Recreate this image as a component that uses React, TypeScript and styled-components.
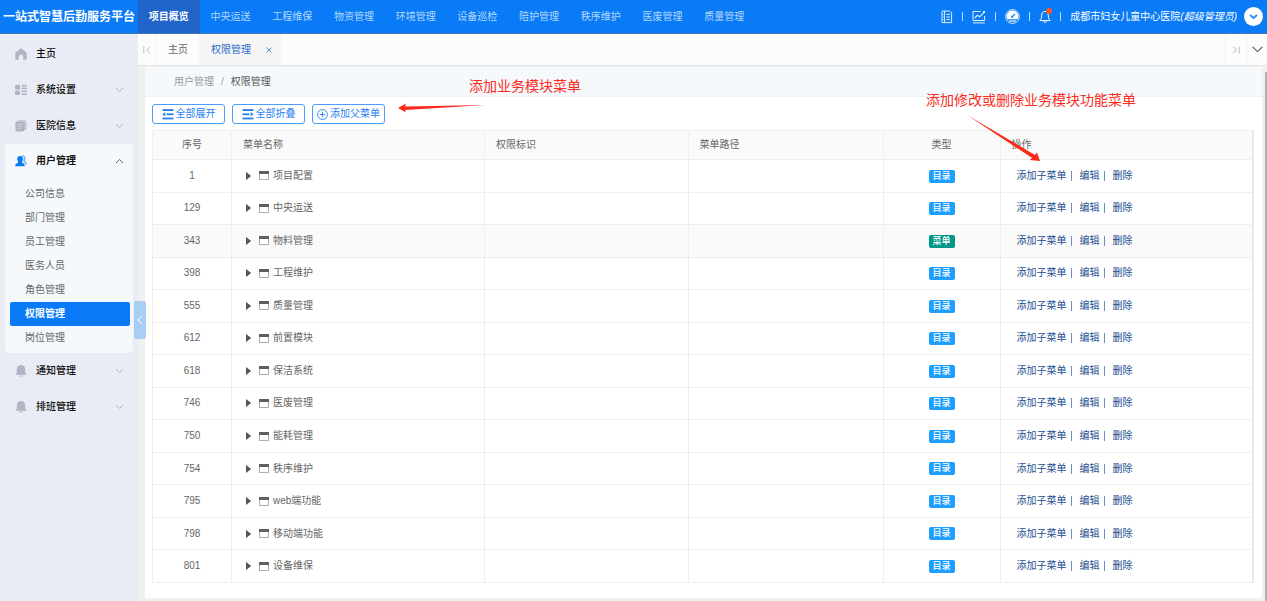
import React from "react";
import styled, { createGlobalStyle, css } from "styled-components";

const GlobalStyle = createGlobalStyle`
  * { box-sizing: border-box; }
  body {
    margin: 0;
    background: #f0f0f0;
    color: #666;
    font: 10px/16px "Liberation Sans", "Noto Sans CJK SC", sans-serif;
  }
  button { font: inherit; color: inherit; background: none; border: 0; padding: 0; cursor: pointer; }
  a { color: inherit; text-decoration: none; }
  ul { list-style: none; margin: 0; padding: 0; }
  svg { display: block; flex: none; }
`;

const Page = styled.div`
  position: relative;
  display: flex;
  flex-direction: column;
  height: 100vh;
`;

/* ---------- header ---------- */
const Header = styled.header`
  display: flex;
  flex: none;
  height: 34px;
  background: #0a7bf7;
  border-bottom: 1px solid #4577b5;
  color: #fff;
`;

const Brand = styled.h1`
  display: flex;
  align-items: center;
  justify-content: center;
  flex: none;
  width: 138px;
  margin: 0;
  font-size: 12px;
  font-weight: 700;
  white-space: nowrap;
`;

const TopNav = styled.nav`
  display: grid;
  grid-template-columns: repeat(10, 1fr);
  width: 617px;
`;

const TopLink = styled.a<{ $active?: boolean }>`
  display: flex;
  align-items: center;
  justify-content: center;
  white-space: nowrap;
  color: ${(p) => (p.$active ? "#fff" : "#b3d7fc")};
  font-weight: ${(p) => (p.$active ? 700 : 400)};
  background: ${(p) => (p.$active ? "#2165c8" : "transparent")};
`;

const HeaderTools = styled.div`
  display: flex;
  align-items: center;
  gap: 9px;
  margin-left: auto;
  padding-right: 4px;
`;

const ToolButton = styled.button`
  position: relative;
  display: flex;
`;

const Dot = styled.span`
  position: absolute;
  top: -2px;
  right: -1px;
  width: 6px;
  height: 6px;
  border-radius: 50%;
  background: #ff5722;
`;

const Divider = styled.span`
  width: 1px;
  height: 9px;
  background: #b9dafd;
`;

const UserName = styled.span`
  white-space: nowrap;
`;

const UserToggle = styled.button`
  display: flex;
  align-items: center;
  justify-content: center;
  width: 19px;
  height: 19px;
  margin-left: -2px;
  border-radius: 50%;
  background: #fff;
`;

/* ---------- sidebar ---------- */
const Body = styled.div`
  display: flex;
  flex: 1;
  min-height: 0;
`;

const Sidebar = styled.aside`
  position: relative;
  flex: none;
  width: 138px;
  padding: 2px 5px 0;
  background: #e9ecf4;
`;

const menuRow = css`
  display: flex;
  align-items: center;
  width: 100%;
  padding: 0 9px 0 10px;
  color: #111;
  text-align: left;
`;

const MenuButton = styled.button<{ $open?: boolean }>`
  ${menuRow}
  height: ${(p) => (p.$open ? "33px" : "36px")};
  font-weight: ${(p) => (p.$open ? 700 : 500)};
`;

const MenuLabel = styled.span`
  flex: 1;
  padding-left: 9px;
`;

const MenuGroup = styled.section`
  padding-bottom: 3px;
  border-radius: 4px;
  background: #f5f9fc;
`;

const SubList = styled.ul`
  padding: 5px 3px 0 5px;
`;

const SubLink = styled.a<{ $active?: boolean }>`
  display: block;
  height: 24px;
  padding-left: 15px;
  border-radius: 2px;
  line-height: 24px;
  color: ${(p) => (p.$active ? "#fff" : "#666")};
  font-weight: ${(p) => (p.$active ? 700 : 400)};
  background: ${(p) => (p.$active ? "#0a7bf7" : "transparent")};
`;

const CollapseHandle = styled.button`
  position: absolute;
  z-index: 1;
  top: 267px;
  right: -8px;
  display: flex;
  align-items: center;
  justify-content: center;
  width: 12px;
  height: 38px;
  border-radius: 2px;
  background: #a9cef6;
`;

/* ---------- main ---------- */
const Main = styled.main`
  display: flex;
  flex: 1;
  flex-direction: column;
  min-width: 0;
`;

const TabBar = styled.div`
  display: flex;
  flex: none;
  height: 32px;
  background: #fcfcfc;
  border-bottom: 1px solid #e4e4e4;
`;

const TabArrow = styled.button<{ $right?: boolean }>`
  display: flex;
  align-items: center;
  justify-content: center;
  width: ${(p) => (p.$right ? "21px" : "18px")};
  border: 0 solid #f2f2f2;
  border-width: ${(p) => (p.$right ? "0 0 0 1px" : "0 1px 0 0")};
`;

const Tab = styled.div<{ $active?: boolean }>`
  display: flex;
  align-items: center;
  gap: 15px;
  padding: 0 ${(p) => (p.$active ? "9px" : "11px")} 0 12px;
  color: ${(p) => (p.$active ? "#2a6bcb" : "#666")};
  background: ${(p) => (p.$active ? "#f5f5f5" : "transparent")};
`;

const TabSpacer = styled.div`
  flex: 1;
`;

const Scroller = styled.div`
  display: flex;
  flex: 1;
  min-height: 0;
  padding-left: 7px;
`;

const ScrollTrack = styled.div`
  display: flex;
  flex: none;
  width: 2px;
  padding-top: 6px;
`;

const ScrollThumb = styled.div`
  flex: 1;
  border-radius: 2px 2px 0 0;
  background: #b0b0b0;
`;

const Panel = styled.section`
  display: flex;
  flex: 1;
  flex-direction: column;
  margin: 1px 3px 3px 0;
  border-radius: 2px;
  background: #fff;
`;

const Breadcrumb = styled.nav`
  display: flex;
  align-items: center;
  flex: none;
  gap: 7px;
  height: 30px;
  padding-left: 29px;
  border-bottom: 1px solid #eef1f4;
  background: #f5f9fc;
  color: #999;
`;

const Current = styled.span`
  color: #555;
`;

const PanelBody = styled.div`
  display: flex;
  flex: 1;
  flex-direction: column;
  gap: 6px;
  min-height: 0;
  padding: 7px 8px 15px 7px;
`;

const Toolbar = styled.div`
  display: flex;
  gap: 7px;
`;

const OutlineButton = styled.button`
  display: flex;
  align-items: center;
  justify-content: center;
  gap: 2px;
  width: 73px;
  height: 20px;
  border: 1px solid #4a9df8;
  border-radius: 3px;
  color: #1e80f0;
  white-space: nowrap;
`;

const TableWrap = styled.div`
  flex: 1;
  min-height: 0;
`;

const Table = styled.table`
  width: 100%;
  height: 100%;
  border-collapse: collapse;
  table-layout: fixed;
  border: 1px solid #e9e9e9;
  border-right: 2px solid #e9e9e9;
`;

const Col = styled.col<{ $width?: string }>`
  width: ${(p) => p.$width ?? "auto"};
`;

const Th = styled.th<{ $center?: boolean }>`
  height: 29px;
  padding: 0 11px;
  border: 1px solid #eee;
  background: #fafafa;
  font-weight: 400;
  text-align: ${(p) => (p.$center ? "center" : "left")};
`;

const Row = styled.tr<{ $hover?: boolean }>`
  background: ${(p) => (p.$hover ? "#fafafa" : "#fff")};
`;

const Td = styled.td<{ $center?: boolean }>`
  padding: 4px 11px;
  border: 1px solid #eee;
  text-align: ${(p) => (p.$center ? "center" : "left")};
`;

const TreeCell = styled.div`
  display: flex;
  align-items: center;
  padding-left: 2px;
`;

const TreeToggle = styled.button`
  display: flex;
  margin-right: 7px;
`;

const TreeName = styled.span`
  padding-left: 4px;
`;

const Badge = styled.span<{ $menu?: boolean }>`
  display: inline-block;
  width: 26px;
  height: 13px;
  border-radius: 2px;
  background: ${(p) => (p.$menu ? "#009688" : "#1e9fff")};
  color: #fff;
  font-size: 9px;
  font-weight: 500;
  line-height: 13px;
  vertical-align: middle;
`;

const Actions = styled.div`
  display: flex;
  align-items: center;
  padding-left: 5px;
  color: #1d4f91;
`;

const ActionLink = styled.a`
  white-space: nowrap;
`;

const Bar = styled.span`
  width: 1px;
  height: 10px;
  margin: 0 8px 0 4px;
  background: #6f8fbc;
`;

/* ---------- callouts ---------- */
const Note = styled.p<{ $top: number; $left?: number; $right?: number }>`
  position: absolute;
  z-index: 2;
  top: ${(p) => p.$top}px;
  left: ${(p) => (p.$left === undefined ? "auto" : `${p.$left}px`)};
  right: ${(p) => (p.$right === undefined ? "auto" : `${p.$right}px`)};
  margin: 0;
  color: #fb2a1c;
  font-size: 14px;
  line-height: 20px;
  white-space: nowrap;
`;

const NoteArrow = styled.svg<{ $top: number; $left?: number; $right?: number }>`
  position: absolute;
  z-index: 2;
  top: ${(p) => p.$top}px;
  left: ${(p) => (p.$left === undefined ? "auto" : `${p.$left}px`)};
  right: ${(p) => (p.$right === undefined ? "auto" : `${p.$right}px`)};
  fill: #fb2a1c;
  pointer-events: none;
`;

/* ---------- icons ---------- */
const Chevron = ({ up, color = "#b5b8c0" }: { up?: boolean; color?: string }) => (
  <svg width="9" height="6" viewBox="0 0 9 6" fill="none" stroke={color}>
    <path d={up ? "M1 5l3.5-3.5L8 5" : "M1 1l3.5 3.5L8 1"} />
  </svg>
);

const HomeIcon = () => (
  <svg width="12" height="12" viewBox="0 0 12 12" fill="#b1b4c4">
    <path d="M6 0.2L11.2 4.2Q11.7 4.6 11.7 5.2V10.8Q11.7 11.8 10.7 11.8H8.2V8.8A2.2 2.2 0 0 0 3.8 8.8V11.8H1.3Q0.3 11.8 0.3 10.8V5.2Q0.3 4.6 0.8 4.2Z" />
  </svg>
);

const GridIcon = () => (
  <svg width="12" height="12" viewBox="0 0 12 12" fill="#b1b4c4">
    <rect x="0" y="0.8" width="5" height="4.6" rx="1" />
    <rect x="0" y="6.4" width="5" height="4.6" rx="1" />
    <rect x="6.4" y="0.8" width="5.6" height="1.7" rx="0.6" />
    <rect x="6.4" y="3.6" width="5.6" height="1.7" rx="0.6" />
    <rect x="6.4" y="6.4" width="5.6" height="1.7" rx="0.6" />
    <rect x="6.4" y="9.2" width="5.6" height="1.7" rx="0.6" />
  </svg>
);

const PapersIcon = () => (
  <svg width="12" height="12" viewBox="0 0 12 12">
    <rect x="2.5" y="0.3" width="9" height="9.6" rx="1.5" fill="#c3c6d2" />
    <rect x="0.4" y="1.6" width="9" height="10" rx="1.5" fill="#b1b4c4" />
    <path d="M2.4 4.5H7.4M2.4 6.5H7.4M2.4 8.6H5.4" stroke="#d5d8e2" strokeWidth="0.8" />
  </svg>
);

const UserIcon = () => (
  <svg width="12" height="12" viewBox="0 0 12 12">
    <path d="M7 0.8A2.8 2.8 0 0 1 9 5.6L11.4 9.4" fill="none" stroke="#7db6f8" strokeWidth="1.6" />
    <path d="M5 1A2.8 3 0 0 1 7.2 6.2V7.4L9.2 9Q9.8 9.6 9.8 11.2H0.2Q0.2 9.6 0.9 9L3 7.4V6.2A2.8 3 0 0 1 5 1Z" fill="#0a7bf7" />
  </svg>
);

const SolidBell = () => (
  <svg width="12" height="12" viewBox="0 0 12 12" fill="#b1b4c4">
    <path d="M6 0A4.2 4.2 0 0 1 10.2 4.4V7.6L11.4 9.2V9.8H0.6V9.2L1.8 7.6V4.4A4.2 4.2 0 0 1 6 0Z" />
    <rect x="4" y="10.4" width="4" height="1.2" rx="0.6" />
  </svg>
);

const ReportIcon = () => (
  <svg width="12" height="14" viewBox="0 0 12 14" fill="none" stroke="#d8eafe">
    <path d="M1 1H8.6L10.6 3V12.6H1Z" />
    <path d="M3.6 1V12.6M5.4 4.4H9M5.4 7H9M5.4 9.6H9" />
    <path d="M1.6 4.4H2.8M1.6 7H2.8M1.6 9.6H2.8" strokeWidth="0.8" />
  </svg>
);

const ChartIcon = () => (
  <svg width="14" height="14" viewBox="0 0 14 14" fill="none" stroke="#e4f0fe">
    <path d="M8.5 1.5H1V10.5H12.6V6M1 12.9H12.8" />
    <path d="M2.8 8L5.4 5.2L7.6 6.8L11.8 2.6" strokeWidth="1.2" />
    <circle cx="12" cy="2.2" r="1.1" fill="#fff" stroke="none" />
  </svg>
);

const GaugeIcon = () => (
  <svg width="15" height="15" viewBox="0 0 15 15">
    <circle cx="7.5" cy="7.5" r="6.9" fill="none" stroke="#cfe5fd" strokeWidth="1" />
    <path d="M7.5 1.6A5.7 5.7 0 0 1 12.6 10.2H2.4A5.7 5.7 0 0 1 7.5 1.6Z" fill="#fff" />
    <path d="M7.2 7.8L9.8 4.8" stroke="#0a7bf7" strokeWidth="1.2" />
    <circle cx="7.2" cy="7.8" r="1.1" fill="#0a7bf7" />
    <path d="M4 12H11" stroke="#e4f0fe" strokeWidth="1.2" />
  </svg>
);

const BellIcon = () => (
  <svg width="12" height="14" viewBox="0 0 12 14" fill="none" stroke="#fff">
    <path d="M6 1.4C3.6 1.4 2.7 3.4 2.7 5.4C2.7 8 1.8 9.4 0.8 10.6H11.2C10.2 9.4 9.3 8 9.3 5.4C9.3 3.4 8.4 1.4 6 1.4Z" />
    <path d="M4.4 11.4Q6 13.8 7.6 11.4" />
  </svg>
);

const ListIcon = ({ out }: { out?: boolean }) => (
  <svg width="12" height="11" viewBox="0 0 12 11" fill="#1e80f0">
    <rect x="0.5" y="0.2" width="11" height="1.8" />
    <rect x={out ? 4.5 : 0.5} y="4.4" width="7" height="1.8" />
    <rect x="0.5" y="8.6" width="11" height="1.8" />
    <path d={out ? "M0.3 5.3L3.2 3.2V7.4Z" : "M11.6 5.3L8.7 3.2V7.4Z"} />
  </svg>
);

const PlusCircle = () => (
  <svg width="11" height="11" viewBox="0 0 11 11" fill="none" stroke="#1e80f0" strokeWidth="0.9">
    <circle cx="5.5" cy="5.5" r="4.9" />
    <path d="M5.5 2.8V8.2M2.8 5.5H8.2" />
  </svg>
);

const WindowIcon = () => (
  <svg width="10" height="9" viewBox="0 0 10 9">
    <rect x="0.5" y="0.5" width="9" height="8" fill="#fff" stroke="#999" strokeWidth="0.8" />
    <rect x="0" y="0" width="10" height="3" fill="#5f5f5f" />
  </svg>
);

/* ---------- data ---------- */
const topItems = ["项目概览", "中央运送", "工程维保", "物资管理", "环境管理", "设备巡检", "陪护管理", "秩序维护", "医废管理", "质量管理"];

const subItems = ["公司信息", "部门管理", "员工管理", "医务人员", "角色管理", "权限管理", "岗位管理"];

const rows: { id: number; name: string; menu?: boolean }[] = [
  { id: 1, name: "项目配置" },
  { id: 129, name: "中央运送" },
  { id: 343, name: "物料管理", menu: true },
  { id: 398, name: "工程维护" },
  { id: 555, name: "质量管理" },
  { id: 612, name: "前置模块" },
  { id: 618, name: "保洁系统" },
  { id: 746, name: "医废管理" },
  { id: 750, name: "能耗管理" },
  { id: 754, name: "秩序维护" },
  { id: 795, name: "web端功能" },
  { id: 798, name: "移动端功能" },
  { id: 801, name: "设备维保" },
];

const MenuItem = ({ icon, label, leaf, open }: { icon: React.ReactNode; label: string; leaf?: boolean; open?: boolean }) => (
  <MenuButton type="button" $open={open} aria-expanded={leaf ? undefined : !!open}>
    {icon}
    <MenuLabel>{label}</MenuLabel>
    {!leaf && <Chevron up={open} color={open ? "#666" : undefined} />}
  </MenuButton>
);

export default function App() {
  return (
    <Page>
      <GlobalStyle />
      <Header>
        <Brand>一站式智慧后勤服务平台</Brand>
        <TopNav>
          {topItems.map((t, i) => (
            <TopLink key={t} href="#" $active={i === 0}>{t}</TopLink>
          ))}
        </TopNav>
        <HeaderTools>
          <ToolButton type="button" aria-label="报表"><ReportIcon /></ToolButton>
          <Divider />
          <ToolButton type="button" aria-label="统计"><ChartIcon /></ToolButton>
          <Divider />
          <ToolButton type="button" aria-label="仪表盘"><GaugeIcon /></ToolButton>
          <Divider />
          <ToolButton type="button" aria-label="通知"><BellIcon /><Dot /></ToolButton>
          <Divider />
          <UserName>成都市妇女儿童中心医院<em>(超级管理员)</em></UserName>
          <UserToggle type="button" aria-label="账户">
            <svg width="9" height="6" viewBox="0 0 9 6" fill="none" stroke="#2f8ff8" strokeWidth="2">
              <path d="M1 1l3.5 3L8 1" />
            </svg>
          </UserToggle>
        </HeaderTools>
      </Header>

      <Body>
        <Sidebar>
          <MenuItem icon={<HomeIcon />} label="主页" leaf />
          <MenuItem icon={<GridIcon />} label="系统设置" />
          <MenuItem icon={<PapersIcon />} label="医院信息" />
          <MenuGroup>
            <MenuItem icon={<UserIcon />} label="用户管理" open />
            <SubList>
              {subItems.map((t) => (
                <li key={t}>
                  <SubLink href="#" $active={t === "权限管理"}>{t}</SubLink>
                </li>
              ))}
            </SubList>
          </MenuGroup>
          <MenuItem icon={<SolidBell />} label="通知管理" />
          <MenuItem icon={<SolidBell />} label="排班管理" />
          <CollapseHandle type="button" aria-label="收起菜单">
            <svg width="6" height="10" viewBox="0 0 6 10" fill="none" stroke="#fff">
              <path d="M5 0.8L1 5L5 9.2" />
            </svg>
          </CollapseHandle>
        </Sidebar>

        <Main>
          <TabBar>
            <TabArrow type="button" aria-label="向左">
              <svg width="8" height="8" viewBox="0 0 8 8" fill="none" stroke="#bbb">
                <path d="M0.8 0.5V7.5M7 0.8L3.6 4L7 7.2" />
              </svg>
            </TabArrow>
            <Tab>主页</Tab>
            <Tab $active>
              权限管理
              <button type="button" aria-label="关闭">
                <svg width="6" height="6" viewBox="0 0 6 6" stroke="#4a86d8" strokeWidth="0.9">
                  <path d="M0.5 0.5L5.5 5.5M5.5 0.5L0.5 5.5" />
                </svg>
              </button>
            </Tab>
            <TabSpacer />
            <TabArrow type="button" aria-label="向右" $right>
              <svg width="8" height="8" viewBox="0 0 8 8" fill="none" stroke="#bbb">
                <path d="M7.2 0.5V7.5M1 0.8L4.4 4L1 7.2" />
              </svg>
            </TabArrow>
            <TabArrow type="button" aria-label="更多" $right>
              <svg width="11" height="7" viewBox="0 0 11 7" fill="none" stroke="#555" strokeWidth="1.1">
                <path d="M0.6 0.8L5.5 5.6L10.4 0.8" />
              </svg>
            </TabArrow>
          </TabBar>

          <Scroller>
            <Panel>
              <Breadcrumb aria-label="位置">
                <a href="#">用户管理</a>
                <span>/</span>
                <Current>权限管理</Current>
              </Breadcrumb>
              <PanelBody>
                <Toolbar>
                  <OutlineButton type="button"><ListIcon out />全部展开</OutlineButton>
                  <OutlineButton type="button"><ListIcon />全部折叠</OutlineButton>
                  <OutlineButton type="button"><PlusCircle />添加父菜单</OutlineButton>
                </Toolbar>
                <TableWrap>
                  <Table>
                    <colgroup>
                      <Col $width="79px" />
                      <Col $width="23%" />
                      <Col />
                      <Col $width="195px" />
                      <Col $width="117px" />
                      <Col $width="253px" />
                    </colgroup>
                    <thead>
                      <tr>
                        <Th $center>序号</Th>
                        <Th>菜单名称</Th>
                        <Th>权限标识</Th>
                        <Th>菜单路径</Th>
                        <Th $center>类型</Th>
                        <Th>操作</Th>
                      </tr>
                    </thead>
                    <tbody>
                      {rows.map((r) => (
                        <Row key={r.id} $hover={r.menu}>
                          <Td $center>{r.id}</Td>
                          <Td>
                            <TreeCell>
                              <TreeToggle type="button" aria-label="展开">
                                <svg width="7" height="8" viewBox="0 0 7 8" fill="#555">
                                  <path d="M1 0L6.2 4L1 8Z" />
                                </svg>
                              </TreeToggle>
                              <WindowIcon />
                              <TreeName>{r.name}</TreeName>
                            </TreeCell>
                          </Td>
                          <Td />
                          <Td />
                          <Td $center><Badge $menu={r.menu}>{r.menu ? "菜单" : "目录"}</Badge></Td>
                          <Td>
                            <Actions>
                              <ActionLink href="#">添加子菜单</ActionLink>
                              <Bar />
                              <ActionLink href="#">编辑</ActionLink>
                              <Bar />
                              <ActionLink href="#">删除</ActionLink>
                            </Actions>
                          </Td>
                        </Row>
                      ))}
                    </tbody>
                  </Table>
                </TableWrap>
              </PanelBody>
            </Panel>
            <ScrollTrack>
              <ScrollThumb />
            </ScrollTrack>
          </Scroller>
        </Main>
      </Body>

      <Note $top={76} $left={469}>添加业务模块菜单</Note>
      <NoteArrow $top={102} $left={398} width="90" height="12" viewBox="0 0 90 12">
        <path d="M0 6L8 1.5L7 4.6L88 3L7 8L8 10.5Z" />
      </NoteArrow>
      <Note $top={90} $right={131}>添加修改或删除业务模块功能菜单</Note>
      <NoteArrow $top={115} $right={226} width="74" height="48" viewBox="0 0 74 48">
        <path d="M0 0L68 40L70 37.4L73 46L62.6 45L65.2 43Z" />
      </NoteArrow>
    </Page>
  );
}
